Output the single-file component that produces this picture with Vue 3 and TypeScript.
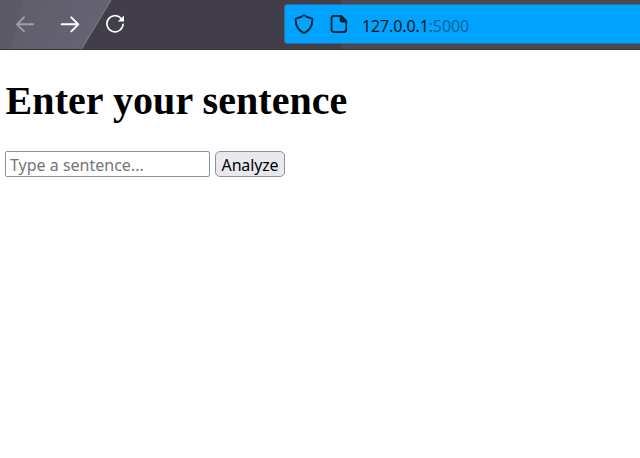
<script setup lang="ts">
import { ref } from 'vue'

const sentence = ref('')
const host = '127.0.0.1'
const port = ':5000'
</script>

<template>
  <div class="window">
    <header class="toolbar">
      <svg class="theme" viewBox="0 0 640 50" aria-hidden="true">
        <defs>
          <linearGradient id="panel" x1="0" x2="1" y1="0" y2="0.3">
            <stop offset="0" stop-color="#5e5c69" />
            <stop offset="1" stop-color="#666472" />
          </linearGradient>
        </defs>
        <path d="M0 0H111L81 50H0Z" fill="url(#panel)" />
        <path d="M0 0H23L10 50H0Z" fill="#5c5a67" />
        <path d="M111 0L81 50" stroke="#777581" stroke-width="1.2" />
        <path d="M341 0H640V50H341Z" fill="#4b4852" />
        <path d="M0 49.5H640" stroke="#38363f" />
      </svg>
      <nav class="controls">
        <svg class="icon back" viewBox="0 0 20 20"><path d="M18.2 10.3H2M9 3.3L2 10.3L9 17.3" /></svg>
        <svg class="icon" viewBox="0 0 20 20"><path d="M1.7 10.3H18.3M11.3 3.3L18.3 10.3L11.3 17.3" /></svg>
        <svg class="icon" viewBox="0 0 20 20">
          <path class="ring" d="M15.8 4.1A8.1 8.1 0 1 0 18.1 10.3" />
          <path class="tip" d="M19 1.4V7.6H12.8Z" />
        </svg>
      </nav>
      <div class="address">
        <svg class="mark" viewBox="0 0 20 20"><path d="M10 1.1C8.2 2.7 5.3 3.8 2.3 4.4C1.5 4.6 1.5 5 1.6 5.9C1.8 11.8 4.4 16.7 10 19.1C15.6 16.7 18.2 11.8 18.4 5.9C18.5 5 18.5 4.6 17.7 4.4C14.7 3.8 11.8 2.7 10 1.1Z" /></svg>
        <svg class="mark" viewBox="0 0 20 20">
          <path d="M4.7 2H12.2L17.2 7V15.8Q17.2 18 15 18H4.7Q2.5 18 2.5 15.8V4.2Q2.5 2 4.7 2Z" />
          <path class="fold" d="M11.2 2H12.5L17.2 6.7V8H12.8Q11.2 8 11.2 6.4Z" />
        </svg>
        <span class="url">{{ host }}<span class="port">{{ port }}</span></span>
      </div>
    </header>
    <main class="page">
      <h1>Enter your sentence</h1>
      <form @submit.prevent>
        <input v-model="sentence" type="text" placeholder="Type a sentence..." />
        <button type="submit">Analyze</button>
      </form>
    </main>
  </div>
</template>

<style>
body {
  margin: 0;
  background: #fff;
}
</style>

<style scoped>
.window {
  height: 458px;
  overflow: hidden;
  background: #fff;
}
.toolbar {
  position: relative;
  display: flex;
  box-sizing: border-box;
  height: 50px;
  padding: 4px 0 6px 15px;
  background: #413e49;
}
.theme {
  position: absolute;
  inset: 0;
  width: 640px;
  height: 50px;
}
.controls {
  position: relative;
  display: flex;
  gap: 25px;
  width: 269px;
  padding-top: 10px;
}
.icon {
  width: 20px;
  height: 20px;
  fill: none;
  stroke: #fff;
  stroke-width: 1.9;
  stroke-linecap: round;
  stroke-linejoin: round;
}
.back {
  opacity: 0.4;
}
.ring {
  stroke-width: 1.6;
}
.tip {
  fill: #fff;
  stroke: none;
}
.address {
  position: relative;
  display: flex;
  flex: 1;
  align-items: center;
  gap: 15px;
  box-sizing: border-box;
  height: 40px;
  padding-left: 9px;
  border: 1px solid #33729f;
  border-right: 0;
  border-radius: 4px 0 0 4px;
  background: #00a4ff;
}
.mark {
  width: 20px;
  height: 20px;
  fill: none;
  stroke: #042437;
  stroke-width: 1.8;
  stroke-linejoin: round;
}
.fold {
  fill: #042437;
  stroke-width: 1;
}
.url {
  margin-left: -2px;
  padding-top: 3px;
  color: #02141f;
  font: 16px/20px "Noto Sans", sans-serif;
  letter-spacing: -0.12px;
}
.port {
  color: #04649b;
}
.page {
  padding: 0 5px;
}
h1 {
  margin: 27px 0 27px;
  padding-left: 0.6px;
  font: bold 40px/47px "Liberation Serif", serif;
  letter-spacing: 0.06px;
}
form {
  display: flex;
  gap: 5px;
}
input,
button {
  box-sizing: border-box;
  height: 26px;
  margin: 0;
  border: 1px solid #8f8f9d;
  font: 16px/22px "Noto Sans", sans-serif;
}
input {
  width: 205px;
  padding: 2px 4px 0;
  border-radius: 2px;
  background: #fff;
  color: #000;
}
input::placeholder {
  color: #757575;
  opacity: 1;
}
button {
  width: 70px;
  padding: 2px 0 0;
  border-radius: 5px;
  background: #e9e9ed;
  color: #000;
  letter-spacing: -0.15px;
}
</style>
